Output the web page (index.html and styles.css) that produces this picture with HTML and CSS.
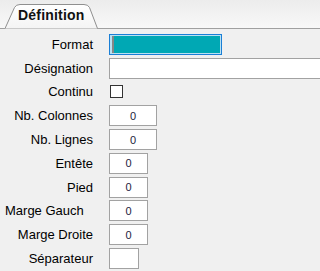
FILE: index.html
```html
<!DOCTYPE html>
<html lang="fr">
<head>
    <meta charset="UTF-8">
    <meta name="viewport" content="width=device-width, initial-scale=1.0">
    <title>Définition</title>
    <link rel="stylesheet" href="styles.css">
</head>
<body>
    <div class="tabs">
        <div class="tab">
            <svg class="tab-shape" width="104" height="29" viewBox="0 0 104 29">
                <defs>
                    <linearGradient id="tabFill" x1="0" y1="0" x2="0" y2="1">
                        <stop offset="0" stop-color="#ffffff"/>
                        <stop offset="1" stop-color="#f4f4f4"/>
                    </linearGradient>
                </defs>
                <path d="M0 28.5 L9.5 7.5 Q11 4.5 15 4.5 L79 4.5 Q83 4.5 84.5 7.5 L92.5 28.5" fill="url(#tabFill)" stroke="#8f8f8f" stroke-width="1"/>
            </svg>
            <span class="tab-label">Définition</span>
        </div>
    </div>

    <form class="form">
        <label>Format</label>
        <div class="field field-format"><span class="selection"></span></div>

        <label>Désignation</label>
        <input type="text" class="field field-wide" value="">

        <label>Continu</label>
        <span class="check"></span>

        <label>Nb. Colonnes</label>
        <input type="text" class="field field-mid" value="0">

        <label>Nb. Lignes</label>
        <input type="text" class="field field-mid" value="0">

        <label>Entête</label>
        <input type="text" class="field field-small" value="0">

        <label>Pied</label>
        <input type="text" class="field field-small" value="0">

        <label class="label-left">Marge Gauch</label>
        <input type="text" class="field field-small" value="0">

        <label>Marge Droite</label>
        <input type="text" class="field field-small" value="0">

        <label>Séparateur</label>
        <input type="text" class="field field-tiny" value="">
    </form>
</body>
</html>
```

FILE: styles.css
```css
body {
    margin: 0;
    padding: 0;
    background-color: #f0f0f0;
    font-family: "Liberation Sans", Arial, sans-serif;
    overflow: hidden;
}

.tabs {
    height: 28px;
    padding-left: 5px;
    background: linear-gradient(#ececec, #f8f8f8);
    border-bottom: 1px solid #a0a0a0;
    display: flex;
    align-items: flex-end;
}

.tab {
    position: relative;
    width: 93px;
    height: 29px;
    margin-bottom: -1px;
}

.tab-shape {
    position: absolute;
    left: 0;
    top: 0;
}

.tab-label {
    position: absolute;
    left: 13px;
    top: 7px;
    font-size: 14px;
    font-weight: bold;
    color: #111111;
    letter-spacing: 0.2px;
}

.form {
    display: grid;
    grid-template-columns: 93px auto;
    grid-auto-rows: 20.8px;
    column-gap: 16px;
    row-gap: 3px;
    padding-top: 5px;
    align-items: center;
    justify-items: start;
}

.form label {
    justify-self: stretch;
    text-align: right;
    font-size: 13px;
    color: #000000;
    white-space: nowrap;
}

.form .label-left {
    text-align: left;
    padding-left: 5px;
}

.field {
    box-sizing: border-box;
    height: 21px;
    margin: 0;
    padding: 0;
    border: 1px solid #a2a2a2;
    background-color: #ffffff;
    font-family: "Liberation Sans", Arial, sans-serif;
    font-size: 11px;
    color: #1c1c3c;
    text-align: center;
    outline: none;
}

.field-format {
    width: 113px;
    border-color: #1a7fd6;
    padding: 1px;
    background-color: #b8e0f2;
}

.selection {
    display: block;
    height: 100%;
    background-color: #00a8b4;
    border-left: 2px solid #868686;
    margin-left: 1px;
}

/* runs off the right edge of the window */
.field-wide {
    width: 211px;
    border-right: none;
}

.field-mid {
    width: 48px;
}

.field-small {
    width: 39px;
}

.field-tiny {
    width: 30px;
}

.check {
    box-sizing: border-box;
    width: 13px;
    height: 13px;
    margin-left: 1px;
    border: 1px solid #333333;
    background-color: #ffffff;
}
```
